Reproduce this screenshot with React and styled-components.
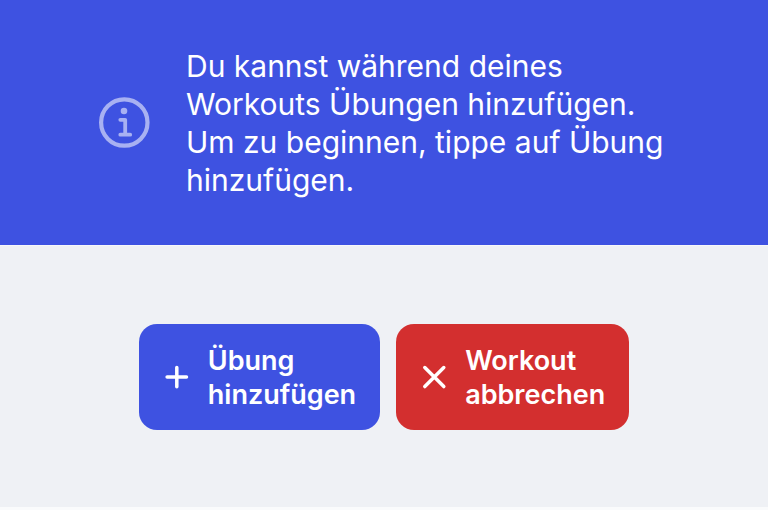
import React from 'react';
import styled, { createGlobalStyle } from 'styled-components';

const GlobalStyle = createGlobalStyle`
  *, *::before, *::after { box-sizing: border-box; }
  body { margin: 0; background: #fafbfc; font-family: Inter, "Liberation Sans", sans-serif; }
`;

const Banner = styled.section`
  display: flex;
  align-items: center;
  gap: 36px;
  padding: 47px 96px 46px 98px;
  background: #3e52e1;
  color: #ffffff;
`;

const InfoIcon = styled.svg`
  flex: none;
  width: 52px;
  height: 52px;
  color: #a8b1f2;
`;

const Message = styled.p`
  flex: 1;
  margin: 0;
  font-size: 30px;
  line-height: 38px;
  font-weight: 400;
`;

const Actions = styled.main`
  display: flex;
  justify-content: center;
  gap: 16px;
  padding: 78px 24px 77px;
  border-top: 1px solid #f6f7fa;
  background: #eff1f5;
`;

const ActionButton = styled.button`
  display: flex;
  align-items: center;
  gap: 18px;
  padding: 20px 24px 18px 26px;
  border: 0;
  border-radius: 18px;
  background: ${({ $danger }) => ($danger ? '#d32f2f' : '#3e52e1')};
  color: #ffffff;
  font: 600 27px/34px Inter, "Liberation Sans", sans-serif;
  text-align: left;
  cursor: pointer;
`;

const ActionIcon = styled.svg`
  flex: none;
  width: 25px;
  height: 25px;
  overflow: visible;
  fill: none;
  stroke: currentColor;
  stroke-width: 3.5;
  stroke-linecap: round;
`;

export default function App() {
  return (
    <>
      <GlobalStyle />
      <Banner>
        <InfoIcon viewBox="0 0 52 52" fill="none" stroke="currentColor" aria-hidden="true">
          <circle cx="26.3" cy="25.5" r="23.2" strokeWidth="4.2" />
          <circle cx="26" cy="14" r="3.3" fill="currentColor" stroke="none" />
          <path d="M22.3 22.8H27.2V37.7M22.3 37.7H32.2" strokeWidth="3.8" strokeLinecap="round" strokeLinejoin="round" />
        </InfoIcon>
        <Message>
          Du kannst während deines Workouts Übungen hinzufügen. Um zu beginnen, tippe auf Übung hinzufügen.
        </Message>
      </Banner>
      <Actions>
        <ActionButton type="button">
          <ActionIcon viewBox="0 0 25 25" aria-hidden="true">
            <path d="M11.8 1.4v19.4M2.1 11.1h19.4" />
          </ActionIcon>
          <span>Übung<br />hinzufügen</span>
        </ActionButton>
        <ActionButton type="button" $danger>
          <ActionIcon viewBox="0 0 25 25" aria-hidden="true">
            <path d="M2.8 1.6l19 19M21.8 1.6l-19 19" />
          </ActionIcon>
          <span>Workout<br />abbrechen</span>
        </ActionButton>
      </Actions>
    </>
  );
}
